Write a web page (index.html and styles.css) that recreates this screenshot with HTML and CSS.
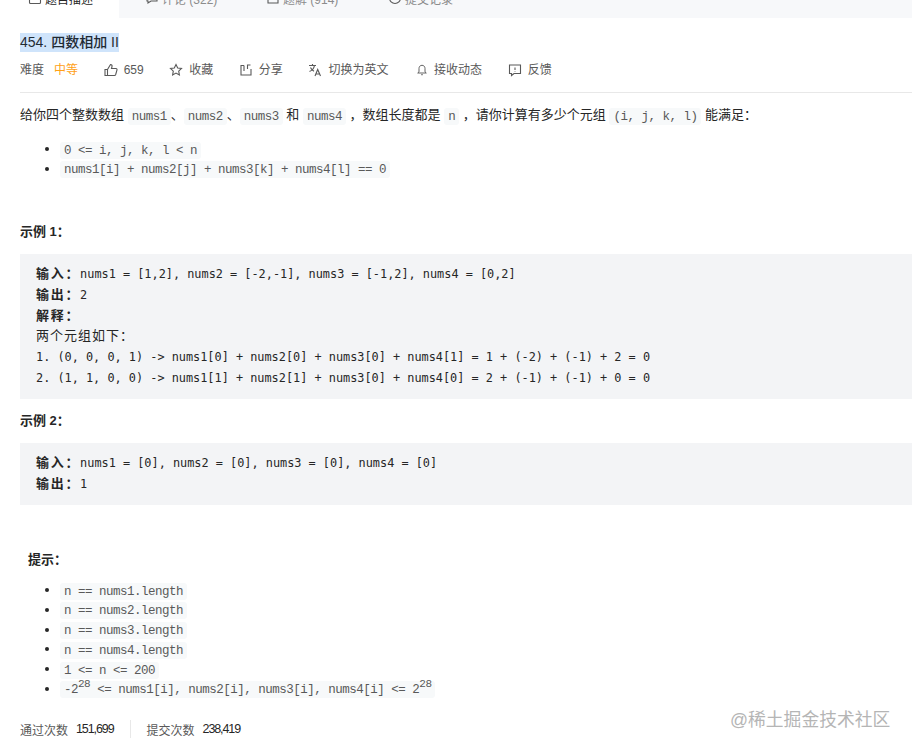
FILE: index.html
```html
<!DOCTYPE html>
<html lang="zh-CN">
<head>
<meta charset="UTF-8">
<meta name="viewport" content="width=device-width, initial-scale=1.0">
<title>四数相加 II</title>
<link rel="stylesheet" href="styles.css">
</head>
<body>
<div class="tabs">
    <div class="tab tab-active">
        <svg class="icon" viewBox="0 0 14 14"><rect x="1.5" y="1.5" width="11" height="11" rx="1"/><path d="M4 5h6M4 8h6"/></svg>
        <span>题目描述</span>
    </div>
    <div class="tab tab-comments">
        <svg class="icon" viewBox="0 0 14 14"><path d="M2 2h10v8H6l-3 2v-2H2z"/></svg>
        <span>评论 (322)</span>
    </div>
    <div class="tab tab-solutions">
        <svg class="icon" viewBox="0 0 14 14"><path d="M2 2h10v10H2zM2 8h10"/></svg>
        <span>题解 (914)</span>
    </div>
    <div class="tab">
        <svg class="icon" viewBox="0 0 14 14"><circle cx="7" cy="7" r="5.5"/><path d="M7 4v3l2 1.500"/></svg>
        <span>提交记录</span>
    </div>
</div>

<div class="content">
    <div class="title"><span class="selected">454. 四数相加 II</span></div>

    <div class="meta">
        <div class="meta-item"><span class="gray">难度</span><span class="medium">中等</span></div>
        <div class="meta-item">
            <svg class="icon" viewBox="0 0 14 14"><path d="M1 6.500h2.500v6H1zM3.500 6.500 6.500 1.500c1.300 0 1.800 1 1.500 2L7.500 5.500H12c.8 0 1.200.7 1 1.400l-1.300 4.600c-.2.600-.6 1-1.200 1h-7"/></svg>
            <span class="gray">659</span>
        </div>
        <div class="meta-item">
            <svg class="icon" viewBox="0 0 14 14"><path d="M7 1.500 8.700 5l3.800.5-2.800 2.600.7 3.800L7 10.100l-3.400 1.800.7-3.800L1.500 5.500 5.300 5z"/></svg>
            <span class="gray">收藏</span>
        </div>
        <div class="meta-item">
            <svg class="icon" viewBox="0 0 14 14"><path d="M5 2.500H2v9.500h10V6M5 2.500V8M8.500 6V2h3"/></svg>
            <span class="gray">分享</span>
        </div>
        <div class="meta-item">
            <svg class="icon" viewBox="0 0 14 14"><path d="M1 2.500h7M4.500 1v1.500M6.500 2.500C6 5 4 7.500 1.500 8.500M2.500 4.500c.8 1.800 2 3 3.500 3.800M7 13l2.700-6.500L12.500 13M8 11h3.500"/></svg>
            <span class="gray">切换为英文</span>
        </div>
        <div class="meta-item">
            <svg class="icon icon-small" viewBox="0 0 14 14"><path d="M7 1.500c-2.200 0-3.500 1.700-3.500 3.700v4L2 10.500h10L10.500 9.200v-4C10.500 3.200 9.200 1.500 7 1.500zM6 12.500h2"/></svg>
            <span class="gray">接收动态</span>
        </div>
        <div class="meta-item">
            <svg class="icon" viewBox="0 0 14 14"><path d="M1.500 2h11v8.500H6L3.500 12.500v-2h-2zM7 4.500v2.500M7 8v.6"/></svg>
            <span class="gray">反馈</span>
        </div>
    </div>

    <div class="desc">
        <p class="intro">给你四个整数数组 <code>nums1</code>、<code>nums2</code>、<code>nums3</code> 和 <code>nums4</code> ，数组长度都是 <code>n</code> ，请你计算有多少个元组 <code>(i, j, k, l)</code> 能满足：</p>

        <ul class="first-list">
            <li><code>0 &lt;= i, j, k, l &lt; n</code></li>
            <li><code>nums1[i] + nums2[j] + nums3[k] + nums4[l] == 0</code></li>
        </ul>

        <p class="example-title example-one"><strong>示例 1：</strong></p>
        <pre><strong>输入：</strong>nums1 = [1,2], nums2 = [-2,-1], nums3 = [-1,2], nums4 = [0,2]
<strong>输出：</strong>2
<strong>解释：</strong>
<span class="cn">两个元组如下：</span>
1. (0, 0, 0, 1) -&gt; nums1[0] + nums2[0] + nums3[0] + nums4[1] = 1 + (-2) + (-1) + 2 = 0
2. (1, 1, 0, 0) -&gt; nums1[1] + nums2[1] + nums3[0] + nums4[0] = 2 + (-1) + (-1) + 0 = 0</pre>

        <p class="example-title"><strong>示例 2：</strong></p>
        <pre><strong>输入：</strong>nums1 = [0], nums2 = [0], nums3 = [0], nums4 = [0]
<strong>输出：</strong>1</pre>

        <p class="hint-title"><strong>提示：</strong></p>
        <ul class="hint-list">
            <li><code>n == nums1.length</code></li>
            <li><code>n == nums2.length</code></li>
            <li><code>n == nums3.length</code></li>
            <li><code>n == nums4.length</code></li>
            <li><code>1 &lt;= n &lt;= 200</code></li>
            <li><code>-2<sup>28</sup> &lt;= nums1[i], nums2[i], nums3[i], nums4[i] &lt;= 2<sup>28</sup></code></li>
        </ul>
    </div>

    <div class="stats">
        <div class="stat"><span class="gray">通过次数</span><span class="num">151,699</span></div>
        <div class="stat-line"></div>
        <div class="stat"><span class="gray">提交次数</span><span class="num">238,419</span></div>
    </div>
</div>

<div class="watermark">@稀土掘金技术社区</div>
</body>
</html>
```

FILE: styles.css
```css
html, body {
    height: 100%;
}

body {
    position: relative;
    margin: 0;
    height: 751px;
    overflow: hidden;
    background: #fff;
    color: #262626;
    font-family: "Liberation Sans", "Noto Sans CJK SC", sans-serif;
    font-size: 13px;
}

/* the tab row is cut by the top of the shot */
.tabs {
    display: flex;
    height: 40px;
    margin-top: -22px;
    background: #f7f8fa;
    color: #8c8c8c;
    font-size: 12px;
}

.tab {
    display: flex;
    align-items: center;
    padding-left: 26px;
    gap: 3px;
    box-sizing: border-box;
}

.tab-active {
    width: 119px;
    padding-left: 28px;
    background: #fff;
    color: #262626;
}

.tab-comments {
    width: 121px;
}

.tab-solutions {
    width: 122px;
}

.icon {
    width: 14px;
    height: 14px;
    flex: none;
    fill: none;
    stroke: #595959;
    stroke-width: 1.1;
}

.icon-small {
    width: 12px;
    height: 12px;
    margin-left: 2px;
}

.content {
    padding-left: 20px;
}

.title {
    margin-top: 15px;
    height: 19px;
    line-height: 19px;
    font-size: 14px;
    font-weight: 500;
}

.selected {
    display: inline-block;
    width: 99px;
    background: #cfe4fb;
    color: #1f2a33;
}

.meta {
    display: flex;
    align-items: center;
    gap: 25.600px;
    margin-top: 9px;
    padding-bottom: 13px;
    height: 18px;
    line-height: 18px;
    border-bottom: 1px solid #e8e8e8;
    font-size: 12px;
}

.meta-item {
    display: flex;
    align-items: center;
    gap: 6px;
}

.meta-item .medium {
    margin-left: 4px;
    color: #ffa116;
}

.gray {
    color: #595959;
}

.desc p {
    margin: 0;
}

.desc .intro {
    margin-top: 12px;
    line-height: 20px;
}

code {
    padding: 1.500px 4px;
    background: #f7f9fa;
    border-radius: 3px;
    color: #595959;
    font-family: "Liberation Mono", "DejaVu Sans Mono", monospace;
    font-size: 12.500px;
    letter-spacing: -0.500px;
    line-height: 1;
}

ul {
    margin: 0;
    padding-left: 40px;
    line-height: 19.500px;
}

.first-list {
    margin-top: 14px;
}

.hint-list {
    margin-top: 10.500px;
    line-height: 19.700px;
}

sup {
    font-size: 11px;
    line-height: 0;
}

strong {
    font-weight: 700;
}

.desc .example-title {
    margin-top: 12px;
    line-height: 20px;
}

.desc .example-one {
    margin-top: 44px;
}

pre {
    margin: 12px 0 0;
    padding: 10px 16px 10.400px;
    background: #f3f4f6;
    color: #262626;
    font-family: "DejaVu Sans Mono", "Liberation Mono", "Noto Sans CJK SC", monospace;
    font-size: 11.870px;
    line-height: 20.800px;
}

pre strong,
.cn {
    font-family: "Noto Sans CJK SC", sans-serif;
    font-size: 13px;
    line-height: 1;
}

pre strong {
    letter-spacing: 1.700px;
}

.cn {
    letter-spacing: 1px;
}

.desc .hint-title {
    margin-top: 44.600px;
    padding-left: 8px;
    line-height: 20px;
}

.stats {
    display: flex;
    align-items: center;
    margin-top: 22px;
    height: 18px;
    font-size: 12px;
}

.stat {
    display: flex;
    align-items: center;
    gap: 8px;
}

.num {
    color: #262626;
    font-size: 12.500px;
    letter-spacing: -1.100px;
}

.stat-line {
    width: 1px;
    height: 18px;
    margin: 0 16px;
    background: #e8e8e8;
}

.watermark {
    position: absolute;
    left: 730px;
    top: 708px;
    color: #b5b5b5;
    font-size: 17.800px;
    line-height: 24px;
    white-space: nowrap;
}
```
